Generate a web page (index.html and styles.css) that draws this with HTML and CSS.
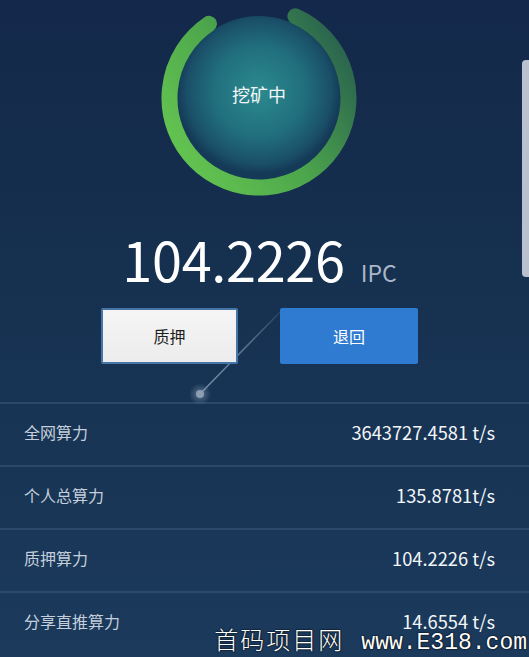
FILE: index.html
```html
<!DOCTYPE html>
<html lang="zh-CN">
<head>
<meta charset="utf-8">
<title>挖矿</title>
<link rel="stylesheet" href="styles.css">
</head>
<body>
<div class="page">
  <section class="hero">
    <div class="ring">
      <svg class="ring-svg" width="196" height="196" viewBox="0 0 196 196">
        <defs>
          <radialGradient id="core" cx="50%" cy="46%" r="50%">
            <stop offset="0" stop-color="#2b8a8e"/>
            <stop offset="0.55" stop-color="#216f7e"/>
            <stop offset="0.88" stop-color="#1a4f68"/>
            <stop offset="1" stop-color="#153a58"/>
          </radialGradient>
          <linearGradient id="arc" gradientUnits="userSpaceOnUse" x1="20" y1="150" x2="185" y2="40">
            <stop offset="0" stop-color="#62c250"/>
            <stop offset="0.45" stop-color="#4da64c"/>
            <stop offset="1" stop-color="#28604e"/>
          </linearGradient>
        </defs>
        <circle cx="98" cy="98" r="82" fill="url(#core)"/>
        <path d="M134.4 16.24 A89.5 89.5 0 1 1 47.95 23.8" fill="none" stroke="url(#arc)" stroke-width="16" stroke-linecap="round"/>
      </svg>
      <span class="ring-label">挖矿中</span>
    </div>
    <div class="amount">
      <span class="amount-value">104.2226</span>
      <span class="amount-unit">IPC</span>
    </div>
    <div class="actions">
      <button class="btn btn-light">质押</button>
      <button class="btn btn-primary">退回</button>
    </div>
    <svg class="streak" width="120" height="120" viewBox="0 0 120 120">
      <defs>
        <linearGradient id="streakGrad" x1="0" y1="1" x2="1" y2="0">
          <stop offset="0" stop-color="#9fb6d0" stop-opacity="0.7"/>
          <stop offset="0.6" stop-color="#9fb6d0" stop-opacity="0.45"/>
          <stop offset="1" stop-color="#9fb6d0" stop-opacity="0.05"/>
        </linearGradient>
        <radialGradient id="glow">
          <stop offset="0" stop-color="#a8bcd4" stop-opacity="0.45"/>
          <stop offset="1" stop-color="#a8bcd4" stop-opacity="0"/>
        </radialGradient>
      </defs>
      <line x1="10" y1="108" x2="96" y2="20" stroke="url(#streakGrad)" stroke-width="1.5"/>
      <circle cx="10" cy="108" r="11" fill="url(#glow)"/>
      <circle cx="10" cy="108" r="4" fill="#8c9db4"/>
    </svg>
  </section>

  <ul class="stats">
    <li class="stat"><span class="stat-label">全网算力</span><span class="stat-value">3643727.4581 t/s</span></li>
    <li class="stat"><span class="stat-label">个人总算力</span><span class="stat-value">135.8781t/s</span></li>
    <li class="stat"><span class="stat-label">质押算力</span><span class="stat-value">104.2226 t/s</span></li>
    <li class="stat"><span class="stat-label">分享直推算力</span><span class="stat-value">14.6554 t/s</span></li>
  </ul>

  <div class="scrollbar"></div>
  <div class="watermark"><span class="wm-cn">首码项目网</span><span class="wm-en">www.E318.com</span></div>
</div>
</body>
</html>
```

FILE: styles.css
```css
* { box-sizing: border-box; }
html, body {
  margin: 0;
  padding: 0;
  height: 100%;
}
body {
  font-family: "Noto Sans CJK SC", "Noto Sans", sans-serif;
  background: linear-gradient(180deg, #13284a 0%, #16304f 40%, #1b3a5c 100%);
  color: #fff;
  overflow: hidden;
}
.page {
  position: relative;
  width: 529px;
  height: 657px;
  overflow: hidden;
}
.hero {
  position: relative;
  padding-right: 10px;
  display: flex;
  flex-direction: column;
  align-items: center;
  height: 402px;
}
.ring {
  position: relative;
  width: 196px;
  height: 196px;
  margin-left: -1px;
}
.ring-svg { display: block; }
.ring-label {
  position: absolute;
  left: 0;
  right: 0;
  top: 82px;
  text-align: center;
  font-size: 18px;
  line-height: 24px;
  color: #f2f6f8;
}
.amount {
  margin-top: 36px;
  display: flex;
  align-items: baseline;
  gap: 16px;
  line-height: 54px;
  height: 54px;
}
.amount-value {
  font-size: 54px;
  color: #ffffff;
  letter-spacing: -0.3px;
}
.amount-unit {
  font-size: 23px;
  color: #a9b7c8;
}
.actions {
  margin-top: 22px;
  display: flex;
  gap: 42px;
  position: relative;
  z-index: 2;
}
.btn {
  width: 137px;
  height: 56px;
  font-family: "Noto Sans CJK SC", sans-serif;
  font-size: 16px;
  border-radius: 2px;
  cursor: pointer;
}
.btn-light {
  background: linear-gradient(180deg, #f5f5f5 0%, #ececec 100%);
  border: 2px solid #4676a8;
  color: #1e1e1e;
}
.btn-primary {
  width: 138px;
  background: #2f7bd1;
  border: none;
  color: #ffffff;
}
.streak {
  position: absolute;
  left: 190px;
  top: 286px;
  z-index: 1;
}
.stats {
  list-style: none;
  margin: 0;
  padding: 0;
}
.stat {
  height: 63px;
  border-top: 2px solid #2b4a6b;
  display: flex;
  align-items: center;
  justify-content: space-between;
  padding: 0 34px 5px 24px;
}
.stat-label {
  font-size: 16px;
  color: #c4cfdb;
}
.stat-value {
  font-size: 18.3px;
  color: #f3f6f9;
}
.scrollbar {
  position: absolute;
  right: 0;
  top: 60px;
  width: 7px;
  height: 217px;
  border-radius: 4px 0 0 4px;
  background: #b8c1cd;
}
.watermark {
  position: absolute;
  right: 2px;
  bottom: 0;
  display: flex;
  align-items: baseline;
  gap: 17px;
  white-space: nowrap;
  color: #ffffff;
  text-shadow: 0 0 2px #000, 0 0 1px #000;
  line-height: 28px;
  z-index: 5;
}
.wm-cn {
  font-family: "Noto Sans CJK SC", sans-serif;
  font-weight: 300;
  font-size: 24px;
  letter-spacing: 2px;
}
.wm-en {
  font-family: "Liberation Mono", "DejaVu Sans Mono", monospace;
  font-size: 23px;
}
```
